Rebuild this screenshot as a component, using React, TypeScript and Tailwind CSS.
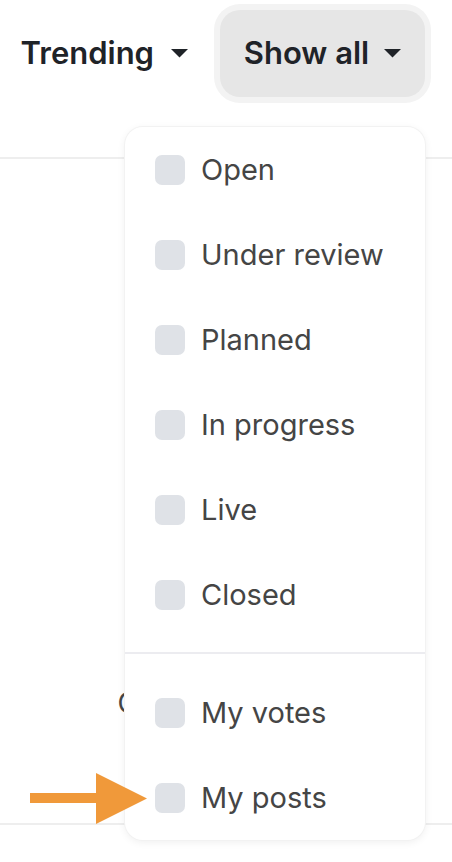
import * as React from "react";

const statuses = ["Open", "Under review", "Planned", "In progress", "Live", "Closed"];
const mine = ["My votes", "My posts"];

function Caret() {
  return (
    <svg width="17" height="9" viewBox="0 0 17 9" className="shrink-0">
      <path d="M0 0 H17 L8.5 8.5 Z" fill="#1f2328" />
    </svg>
  );
}

function FilterRow({ label }: { label: string }) {
  return (
    <label className="flex h-[85px] items-center gap-4 pl-[30px]">
      <span className="h-[30px] w-[30px] shrink-0 rounded-[7px] bg-[#dfe2e7]" />
      <span className="text-[29px] leading-none text-[#454545]">{label}</span>
    </label>
  );
}

export default function App() {
  return (
    <div
      className="relative h-[862px] w-[452px] overflow-hidden bg-white"
      style={{ fontFamily: "Inter, 'Noto Sans', sans-serif" }}
    >
      {/* header */}
      <div className="flex h-[106px] items-center justify-end pr-[21px]">
        <button className="mr-[26px] flex items-center gap-[17px] text-[31px] font-semibold text-[#1f2328]">
          <span>Trending</span>
          <Caret />
        </button>
        <div className="rounded-[26px] bg-[#f3f3f3] p-[6px]">
          <button className="flex h-[87px] w-[205px] items-center justify-center gap-[15px] rounded-[20px] bg-[#e6e6e6] text-[31px] font-semibold text-[#1f2328]">
            <span>Show all</span>
            <Caret />
          </button>
        </div>
      </div>

      {/* page content behind the menu */}
      <div className="mt-[51px] border-t-2 border-[#eeeeee]" />
      <div className="mt-[523px] flex justify-end pr-[314px] text-[28px] text-[#454545]">C</div>
      <div className="mt-[99px] border-t-2 border-[#eeeeee]" />

      {/* dropdown */}
      <div className="absolute left-[125px] top-[127px] w-[300px] rounded-[18px] bg-white shadow-[0_2px_8px_rgba(0,0,0,0.07)] ring-1 ring-[#f2f2f2]">
        <div className="pb-[15px]">
          {statuses.map((s) => (
            <FilterRow key={s} label={s} />
          ))}
        </div>
        <div className="border-t-2 border-[#ececf0]" />
        <div className="pt-[16px]">
          {mine.map((s) => (
            <FilterRow key={s} label={s} />
          ))}
        </div>
      </div>

      {/* annotation arrow */}
      <svg
        className="absolute left-[30px] top-[773px]"
        width="118"
        height="51"
        viewBox="0 0 118 51"
      >
        <rect x="0" y="20" width="68" height="10" fill="#f0993a" />
        <path d="M66 0 L117 25.5 L66 51 Z" fill="#f0993a" />
      </svg>
    </div>
  );
}
